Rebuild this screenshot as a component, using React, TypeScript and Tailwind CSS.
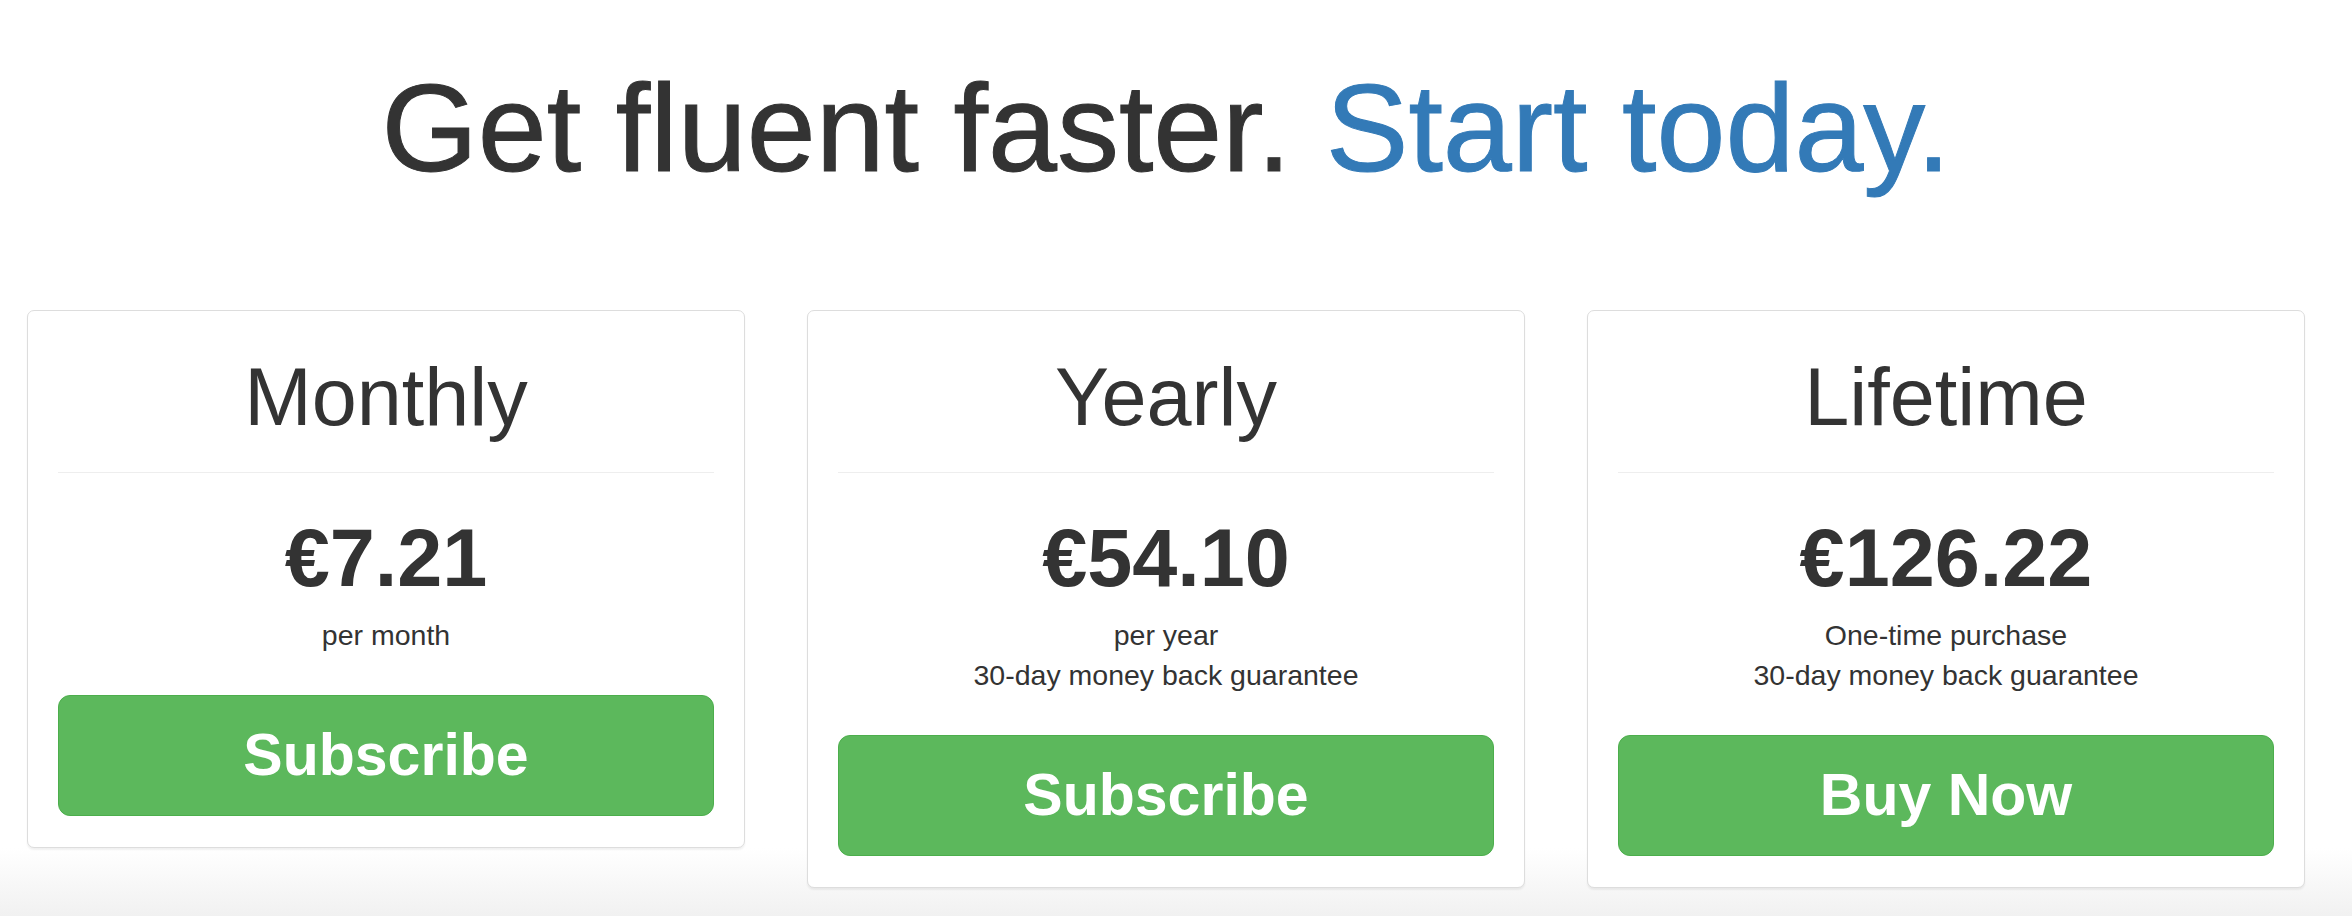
const plans = [
  { name: 'Monthly', price: '€7.21', notes: ['per month'], cta: 'Subscribe' },
  { name: 'Yearly', price: '€54.10', notes: ['per year', '30-day money back guarantee'], cta: 'Subscribe' },
  { name: 'Lifetime', price: '€126.22', notes: ['One-time purchase', '30-day money back guarantee'], cta: 'Buy Now' },
];

function PlanCard({ plan }: { plan: (typeof plans)[number] }) {
  return (
    <div className="w-[718px] shrink-0 rounded-[7px] border border-[#ddd] bg-white px-[30px] pt-[42px] pb-[31px] text-center shadow-[0_2px_2px_rgba(0,0,0,0.06)]">
      <h2 className="text-[81px] leading-[89px] font-normal text-[#333]">{plan.name}</h2>
      <div className="mt-[30px] h-px bg-[#eee]" />
      <p className="mt-[41px] text-[81px] leading-[89px] font-bold text-[#333]">{plan.price}</p>
      <div className="mt-[12px] text-[28.5px] leading-[40px] text-[#333]">
        {plan.notes.map((n) => (
          <p key={n}>{n}</p>
        ))}
      </div>
      <button className="mt-[40px] flex h-[121px] w-full items-center justify-center rounded-[12px] border border-[#4cae4c] bg-[#5cb85c] text-[59px] font-bold text-white">
        {plan.cta}
      </button>
    </div>
  );
}

export default function App() {
  return (
    <div
      className="min-h-[916px] bg-[linear-gradient(to_bottom,#ffffff_848px,#f1f1f1_916px)] pl-[27px] pr-[47px] pt-[61px]"
      style={{ fontFamily: '"Liberation Sans", Arial, Helvetica, sans-serif' }}
    >
      <h1 className="text-center text-[124px] leading-[135px] font-normal text-[#333] [-webkit-text-stroke:1px_currentColor]">
        Get fluent faster. <span className="text-[#337ab7]">Start today.</span>
      </h1>

      <div className="mt-[114px] flex items-start gap-[62px]">
        {plans.map((p) => (
          <PlanCard key={p.name} plan={p} />
        ))}
      </div>
    </div>
  );
}
